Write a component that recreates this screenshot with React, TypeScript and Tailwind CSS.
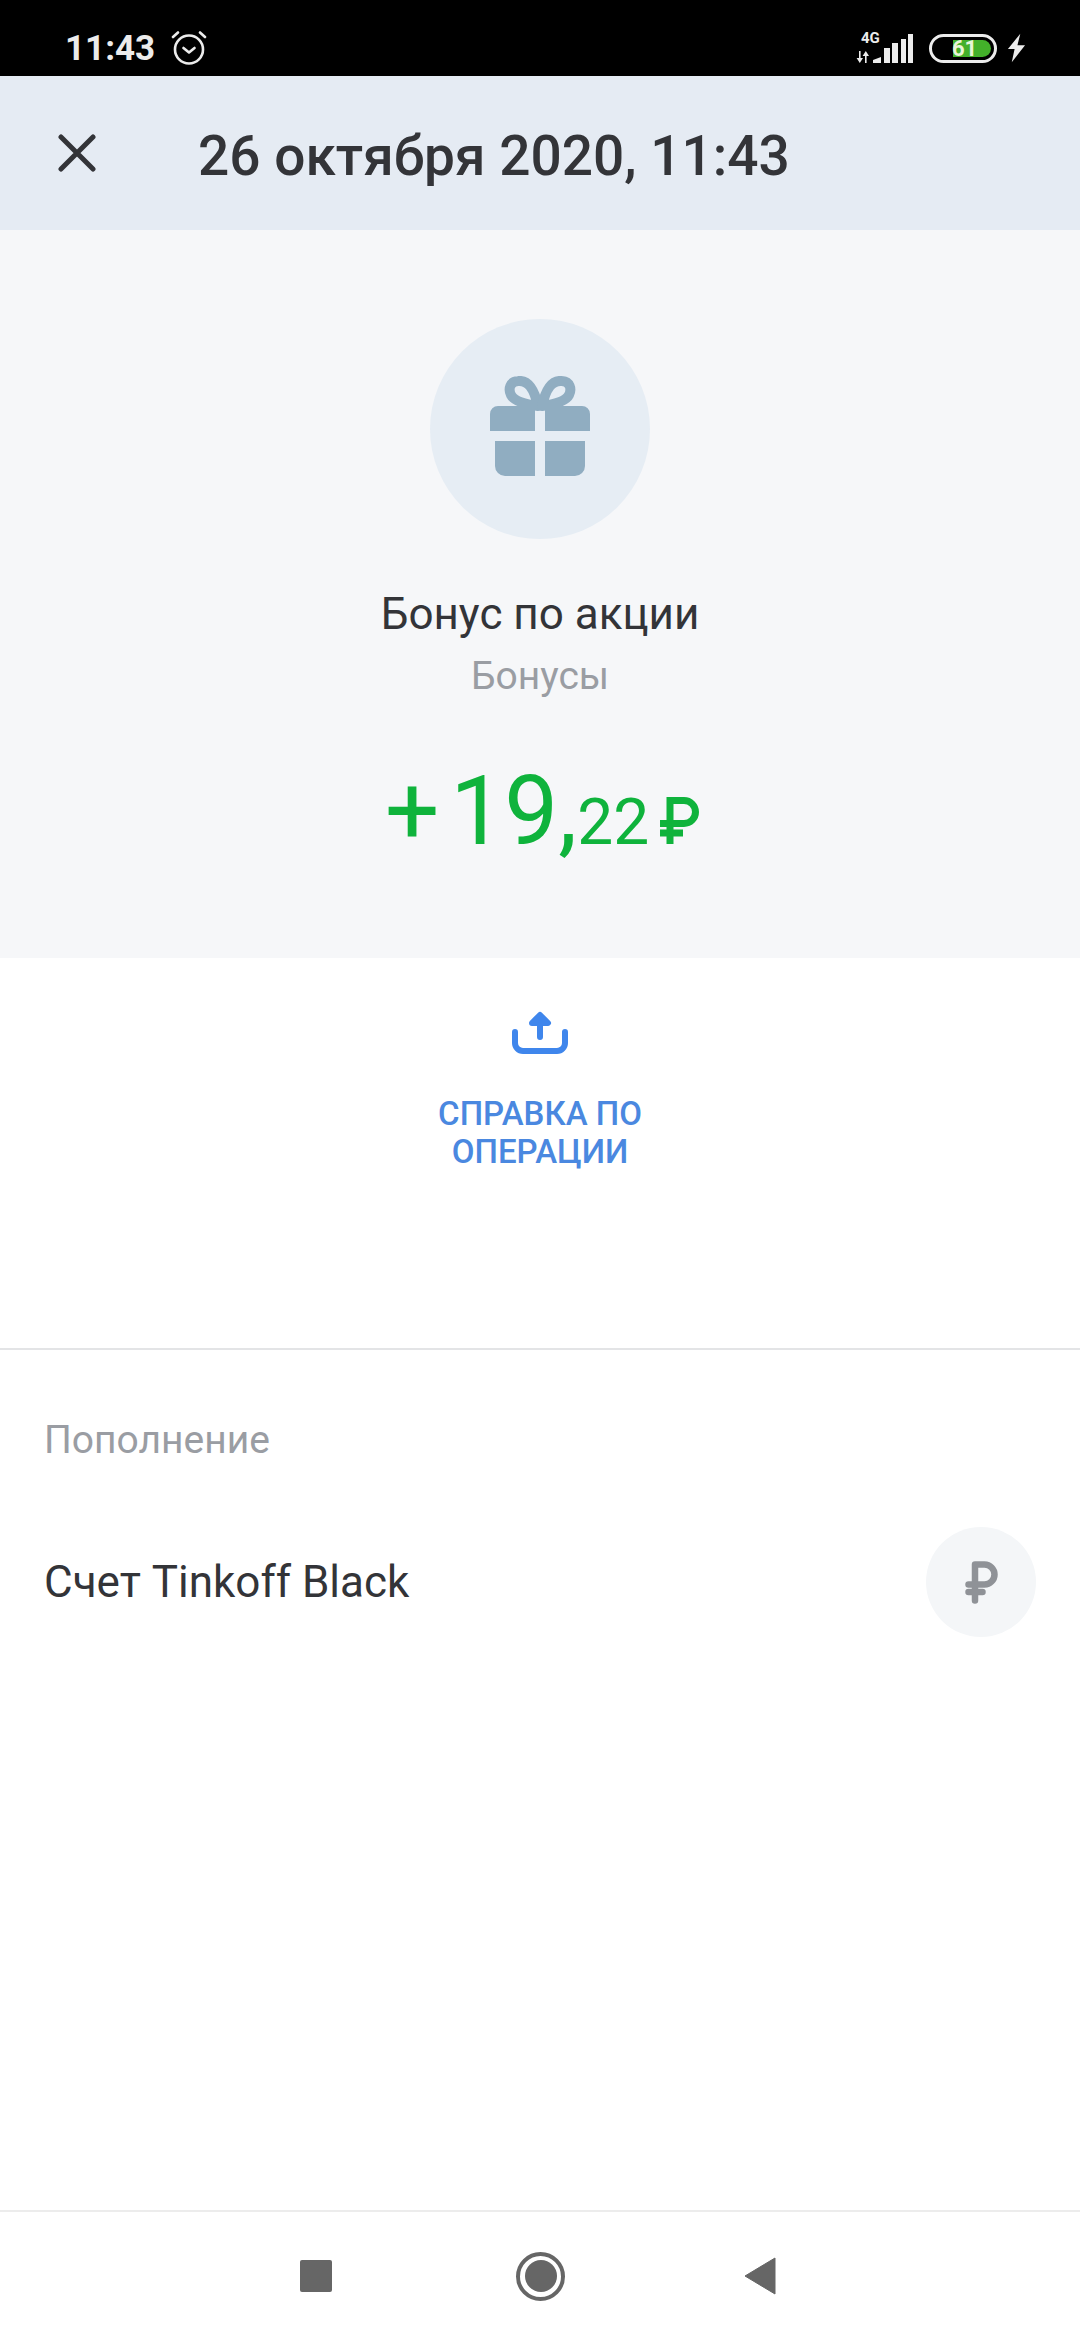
const App = () => {
  return (
    <div className="flex h-[2340px] w-[1080px] flex-col overflow-hidden bg-white font-['Roboto',sans-serif] text-[#333438]">
      {/* status bar */}
      <div className="flex h-[76px] shrink-0 items-center bg-black pl-[65px] pr-[54px] pt-[20px] text-[#ececec]">
        <span className="text-[35px] font-bold leading-none">11:43</span>
        <svg viewBox="0 0 36 34" className="ml-[16px] h-[34px] w-[36px]" fill="none" stroke="currentColor" strokeWidth="2.6" strokeLinecap="round" strokeLinejoin="round">
          <circle cx="18" cy="18.5" r="14" />
          <path d="M12.5 17 18 21.5l5.5-4.5M2 6 7 1.5M34 6 29 1.5" />
        </svg>
        <div className="ml-auto flex items-center">
          <div className="relative h-[31px] w-[58px]">
            <span className="absolute left-[5px] top-[-3px] text-[15px] font-bold leading-[16px]">4G</span>
            <svg viewBox="0 0 58 31" className="h-[31px] w-[58px]" fill="currentColor">
              <path d="M3 18h1.6v7H7l-3.2 5-3.2-5H3zM9 30h1.6v-7H13l-3.2-5-3.2 5H9z" />
              <path d="M17 30v-3l8-3v6zM28 30V15h6v15zM36 30V10h6v20zM45 30V6h5v24zM52 30V1h5v29z" />
            </svg>
          </div>
          <div className="relative ml-[15px] flex h-[29px] w-[68px] items-center justify-end rounded-full border-[3px] border-[#ececec] pr-[3px]">
            <div className="h-[17px] w-[38px] rounded-r-full bg-[#43b02a]" />
            <span className="absolute left-[20px] top-[-2px] text-[22px] font-bold leading-[27px] text-[#e8f5d8]">61</span>
          </div>
          <svg viewBox="0 0 20 30" className="ml-[10px] h-[30px] w-[19px]" fill="currentColor">
            <path d="M14 0 1 16h7L5 30l14-18h-8z" />
          </svg>
        </div>
      </div>

      {/* header */}
      <div className="flex h-[154px] shrink-0 items-center bg-[#e5ebf3]">
        <svg viewBox="0 0 38 38" className="ml-[58px] h-[38px] w-[38px]" fill="none" stroke="#333438" strokeWidth="5" strokeLinecap="round">
          <path d="M3 3l32 32M35 3 3 35" />
        </svg>
        <h1 className="ml-[102px] pt-[6px] text-[55px] font-medium leading-none">26 октября 2020, 11:43</h1>
      </div>

      {/* summary */}
      <div className="flex h-[728px] shrink-0 flex-col items-center bg-[#f6f7f9] pt-[89px]">
        <div className="flex h-[220px] w-[220px] items-center justify-center rounded-full bg-[#e6edf4]">
          <svg viewBox="0 0 100 100" className="mb-[6px] h-[100px] w-[100px]">
            <g fill="none" stroke="#90adc1" strokeWidth="10" strokeLinejoin="round">
              <path d="M48 30C44 12 38 4 28 5C20 5.500 18 13 21 19C24 25 34 28 48 30z" />
              <path d="M52 30C56 12 62 4 72 5C80 5.500 82 13 79 19C76 25 66 28 52 30z" />
            </g>
            <path fill="#90adc1" d="M0 55V38a8 8 0 0 1 8-8h37v25zM55 30h37a8 8 0 0 1 8 8v17H55zM5 65h40v35H15A10 10 0 0 1 5 90zM55 65h40v25a10 10 0 0 1-10 10H55z" />
          </svg>
        </div>
        <div className="mt-[47px] text-[44px] leading-[56px]">Бонус по акции</div>
        <div className="mt-[9px] text-[39px] leading-[50px] text-[#9a9da3]">Бонусы</div>
        <div className="mt-[54px] flex items-baseline pl-[4px] leading-[112px] text-[#0fb33c]">
          <span className="text-[96px]">+</span>
          <span className="ml-[11px] text-[96px]">19,</span>
          <span className="text-[64px]">22</span>
          <svg viewBox="0 0 40 47" className="ml-[10px] h-[47px] w-[40px]" fill="none" stroke="currentColor" strokeWidth="7">
            <path d="M11 47V3.500h14a11.500 11.500 0 0 1 0 23H1M1 36h23" />
          </svg>
        </div>
      </div>

      {/* action */}
      <div className="flex h-[392px] shrink-0 flex-col items-center border-b-2 border-[#e3e4e6] pt-[53px] text-[#4a88e0]">
        <svg viewBox="0 0 56 44" className="h-[44px] w-[56px]" fill="none" stroke="#3f86ec" strokeLinecap="round" strokeLinejoin="round" strokeWidth="6">
          <path d="M3 21v11a8 8 0 0 0 8 8h34a8 8 0 0 0 8-8V21M28 26V5" />
          <path d="M20 12 28 4l8 8z" fill="#3f86ec" />
        </svg>
        <div className="mt-[40px] w-[270px] text-center text-[33px] font-medium leading-[38px]">СПРАВКА ПО ОПЕРАЦИИ</div>
      </div>

      {/* account */}
      <div className="pl-[44px] pr-[44px] pt-[65px] text-[#9a9da3]">
        <div className="text-[39px] leading-[50px]">Пополнение</div>
      </div>
      <div className="mt-[62px] flex items-center justify-between pl-[44px] pr-[44px]">
        <span className="text-[44px] leading-[56px]">Счет Tinkoff Black</span>
        <div className="flex h-[110px] w-[110px] items-center justify-center rounded-full bg-[#f4f6f8] text-[#8f9297]">
          <svg viewBox="0 0 33 43" className="h-[43px] w-[33px]" fill="none" stroke="currentColor" strokeWidth="6.500" strokeLinecap="round" strokeLinejoin="round">
            <path d="M10 39.500V3.500h9.500a10 10 0 0 1 0 20H3.500M3.500 31h14" />
          </svg>
        </div>
      </div>

      {/* nav bar */}
      <div className="mt-auto flex h-[130px] shrink-0 items-center border-t-2 border-[#ececec] pl-[300px]">
        <div className="h-[32px] w-[32px] rounded-[2px] bg-[#666666]" />
        <div className="ml-[184px] flex h-[49px] w-[49px] items-center justify-center rounded-full border-[4px] border-[#666666]">
          <div className="h-[32px] w-[32px] rounded-full bg-[#666666]" />
        </div>
        <svg viewBox="0 0 32 38" className="ml-[179px] h-[38px] w-[32px]" fill="#666666" stroke="#666666" strokeWidth="1" strokeLinejoin="round">
          <path d="M1 19 31 1v36z" />
        </svg>
      </div>
    </div>
  );
};

export default App;
